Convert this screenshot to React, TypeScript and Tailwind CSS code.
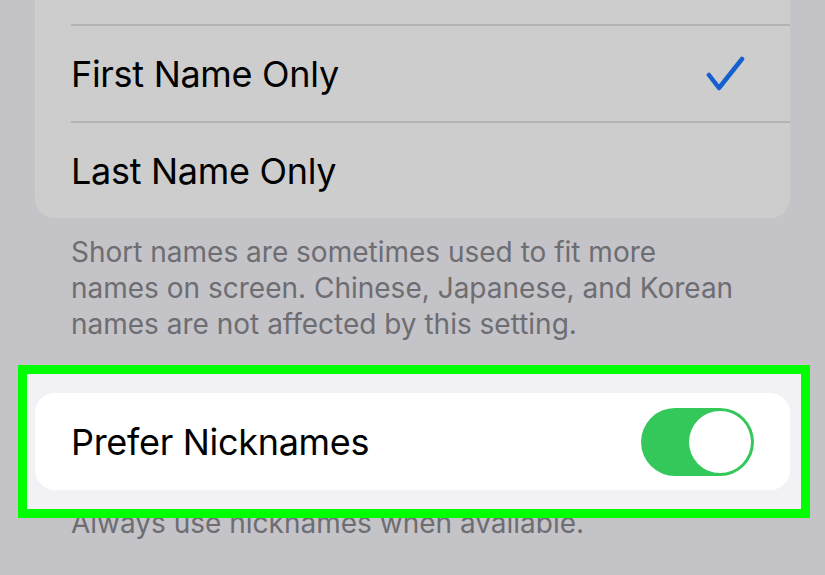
export default function App() {
  const font = { fontFamily: 'Inter, "Noto Sans", sans-serif' };

  return (
    <div className="w-[825px] h-[575px] overflow-hidden bg-[#c4c3c8] text-black" style={font}>
      {/* name format group, top row clipped */}
      <div className="mx-[35px] bg-[#cdcdcd] rounded-b-[20px]">
        <div className="h-[24px]" />
        <div className="ml-[36px] h-[2px] bg-[#b3b3b3]" />
        <div className="h-[95px] pl-[36px] pr-[44px] flex items-center justify-between">
          <span className="text-[36px] tracking-[-0.3px]">First Name Only</span>
          <svg width="40" height="36" viewBox="0 0 40 36" fill="none">
            <polyline points="3,19 13,32 36,3" stroke="#1560cf" strokeWidth="4.5" strokeLinecap="round" strokeLinejoin="round" />
          </svg>
        </div>
        <div className="ml-[36px] h-[2px] bg-[#b3b3b3]" />
        <div className="h-[95px] pl-[36px] flex items-center">
          <span className="text-[36px] tracking-[-0.3px]">Last Name Only</span>
        </div>
      </div>

      <p className="mt-[16px] pl-[71px] text-[28px] leading-[36px] text-[#6d6d72] tracking-[0px] whitespace-nowrap">
        Short names are sometimes used to fit more
        <br />
        names on screen. Chinese, Japanese, and Korean
        <br />
        names are not affected by this setting.
      </p>

      {/* highlighted nickname toggle */}
      <div className="relative z-10 mt-[23px] ml-[18px] w-[792px] h-[153px] border-[9px] border-[#00ff00] bg-[#f1f1f6] pt-[19px] pl-[8px]">
        <div className="w-[755px] h-[97px] bg-white rounded-[20px] pl-[36px] pr-[36px] flex items-center justify-between">
          <span className="text-[36px] tracking-[-0.3px]">Prefer Nicknames</span>
          <div className="w-[113px] h-[68px] rounded-full bg-[#34c759] flex items-center justify-end pr-[3px]">
            <div className="w-[62px] h-[62px] rounded-full bg-white" />
          </div>
        </div>
      </div>
      <p className="-mt-[13px] px-[71px] text-[28px] leading-[36px] text-[#6d6d72] tracking-[0px]">
        Always use nicknames when available.
      </p>
    </div>
  );
}
